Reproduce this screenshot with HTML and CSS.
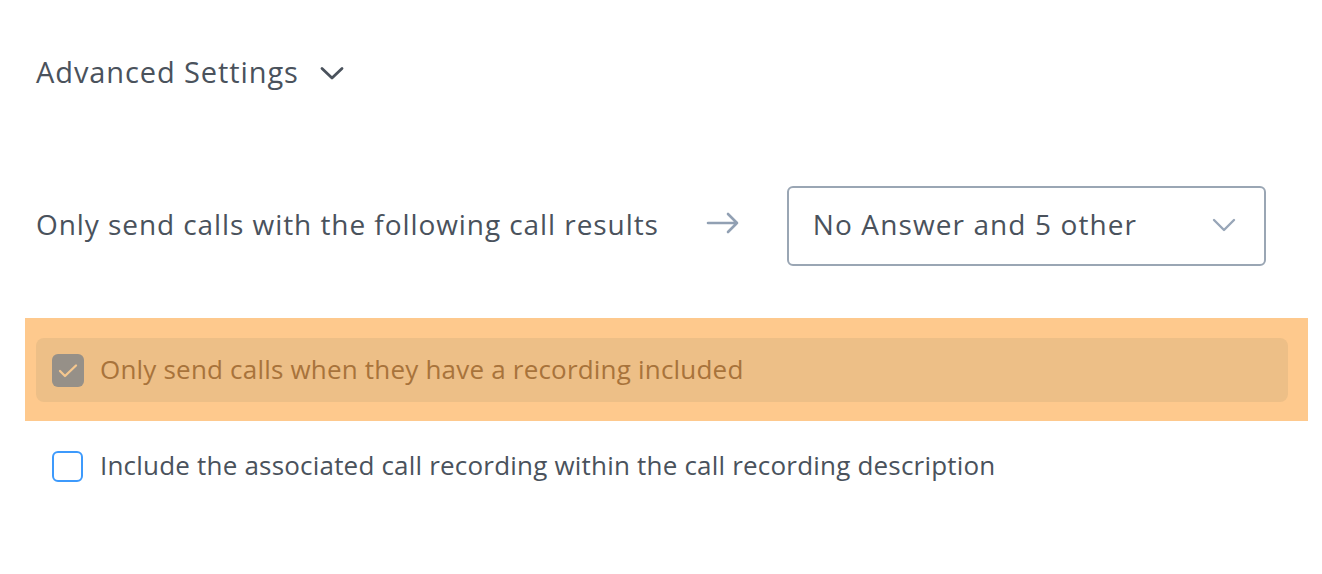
FILE: index.html
```html
<!DOCTYPE html>
<html>
<head>
<meta charset="utf-8">
<link rel="stylesheet" href="styles.css">
</head>
<body>
<div class="page">
  <div class="adv-header">
    <span class="adv-title">Advanced Settings</span>
    <svg class="adv-chevron" width="24" height="15" viewBox="0 0 24 15"><path d="M2 2.5 L12 12 L22 2.5" fill="none" stroke="#4a525c" stroke-width="2.8" stroke-linecap="round" stroke-linejoin="round"/></svg>
  </div>
  <div class="results-row">
    <span class="results-label">Only send calls with the following call results</span>
    <svg class="arrow" width="34" height="22" viewBox="0 0 34 22"><path d="M2 11 H31 M22 2 L31 11 L22 20" fill="none" stroke="#91a0b3" stroke-width="2.6" stroke-linecap="round" stroke-linejoin="round"/></svg>
    <div class="select">
      <span class="select-text">No Answer and 5 other</span>
      <svg class="select-chevron" width="24" height="15" viewBox="0 0 24 15"><path d="M2 2 L12 12 L22 2" fill="none" stroke="#98a6b8" stroke-width="2.4" stroke-linecap="round" stroke-linejoin="round"/></svg>
    </div>
  </div>
  <div class="highlight">
    <div class="check-row checked-row">
      <span class="box box-checked">
        <svg class="tick" width="22" height="18" viewBox="0 0 22 18"><path d="M3 9 L8 14 L19 3.5" fill="none" stroke="#f5c78e" stroke-width="2.3" stroke-linecap="round" stroke-linejoin="round"/></svg>
      </span>
      <span class="check-label muted">Only send calls when they have a recording included</span>
    </div>
  </div>
  <div class="check-row plain-row">
    <span class="box box-empty"></span>
    <span class="check-label">Include the associated call recording within the call recording description</span>
  </div>
</div>
</body>
</html>
```

FILE: styles.css
```css
* { box-sizing: border-box; }
html, body { margin: 0; padding: 0; background: #ffffff; }
body {
  font-family: "Open Sans", "Lato", sans-serif;
  color: #4a525c;
}
.page {
  width: 1322px;
  height: 574px;
  padding-top: 52px;
}
.adv-header {
  display: flex;
  align-items: center;
  gap: 21px;
  padding-left: 36px;
  height: 40px;
}
.adv-title {
  font-size: 29px;
  letter-spacing: 0.9px;
  line-height: 40px;
}
.adv-chevron { margin-top: 2px; }
.results-row {
  display: flex;
  align-items: center;
  margin-top: 94px;
  padding-left: 36px;
  height: 80px;
}
.results-label {
  font-size: 28px;
  letter-spacing: 0.93px;
  line-height: 40px;
  margin-top: -4px;
}
.arrow { margin-left: 47px; margin-top: -6px; }
.select {
  margin-left: 47px;
  width: 479px;
  height: 80px;
  border: 2px solid #9aa6b4;
  border-radius: 6px;
  display: flex;
  align-items: center;
  justify-content: space-between;
  padding: 0 28px 0 24px;
}
.select-text {
  font-size: 28px;
  letter-spacing: 1.1px;
  color: #4a525c;
  margin-top: -4px;
}
.select-chevron { margin-top: -2px; }
.highlight {
  margin-top: 52px;
  margin-left: 25px;
  width: 1283px;
  height: 103px;
  background: #fec98d;
  padding: 20px 20px 0 11px;
}
.check-row {
  display: flex;
  align-items: center;
  gap: 16px;
}
.checked-row {
  height: 64px;
  background: #edbf87;
  border-radius: 8px;
  padding-left: 16px;
}
.plain-row {
  margin-top: 13px;
  padding-left: 52px;
  height: 64px;
}
.box {
  width: 32px;
  height: 33px;
  border-radius: 6px;
  flex: none;
  display: flex;
  align-items: center;
  justify-content: center;
}
.box-checked { background: #969088; }
.tick { margin-top: 2px; }
.box-empty { width: 31px; height: 31px; margin-right: 1px; border: 2px solid #3d9afc; background: #fff; }
.check-label {
  font-size: 26px;
  letter-spacing: 0.2px;
  line-height: 34px;
  margin-top: -2px;
}
.muted { color: #a8733b; }
```
